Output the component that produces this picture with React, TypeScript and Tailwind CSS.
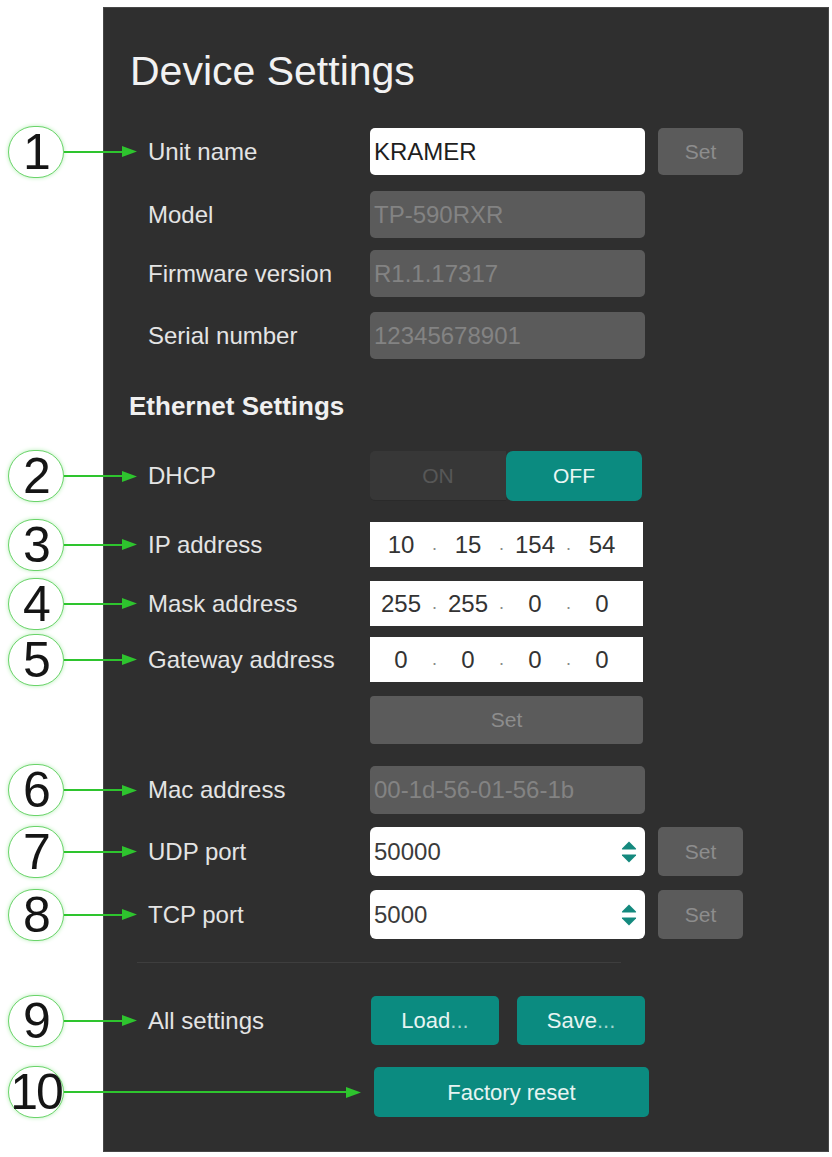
import React from "react";

const TEAL = "bg-[#0b8b80]";

function Callout({ n, long }: { n: number; long?: boolean }) {
  return (
    <div className="absolute left-[-103px] top-1/2 -translate-y-1/2 flex items-center pointer-events-none">
      <div className="ml-[7px] w-[56px] h-[52px] shrink-0 rounded-full border-[1.5px] border-[#6ad46a] bg-white shadow-[0_0_4px_#b9efb9] flex items-center justify-center text-[50px] leading-none text-[#151515] tracking-[-2px]">
        {n}
      </div>
      <div className={`${long ? "w-[282px]" : "w-[58px]"} h-[2px] bg-[#2ec42e]`} />
      <svg width="15" height="11" viewBox="0 0 15 11" className="shrink-0">
        <polygon points="0,0 15,5.5 0,11" fill="#2ec42e" />
      </svg>
    </div>
  );
}

function Label({ children }: { children: React.ReactNode }) {
  return <div className="w-[222px] shrink-0 text-[24px] text-[#e4e4e4]">{children}</div>;
}

function SetButton() {
  return (
    <button className="ml-[13px] w-[85px] h-full rounded-[5px] bg-[#5b5b5b] text-[21px] text-[#8d8d8d]">
      Set
    </button>
  );
}

function ReadOnly({ value }: { value: string }) {
  return (
    <div className="w-[275px] h-full rounded-[5px] bg-[#5b5b5b] pl-[4px] flex items-center text-[24px] text-[#838383]">
      {value}
    </div>
  );
}

function IpField({ parts }: { parts: string[] }) {
  return (
    <div className="w-[273px] h-full bg-white pl-[3px] flex items-center text-[24px] text-[#333]">
      {parts.map((p, i) => (
        <React.Fragment key={i}>
          {i > 0 && <span className="w-[11px] text-center text-[#8a8a8a] text-[18px]">.</span>}
          <span className="w-[56px] text-center">{p}</span>
        </React.Fragment>
      ))}
    </div>
  );
}

function Spinner() {
  return (
    <svg width="16" height="22" viewBox="0 0 16 22" className="shrink-0">
      <path d="M8 0.5 L15 7.5 Q15.5 8.5 14.5 8.5 L1.5 8.5 Q0.5 8.5 1 7.5 Z" fill="#14897e" />
      <path d="M8 21.5 L15 14.5 Q15.5 13.5 14.5 13.5 L1.5 13.5 Q0.5 13.5 1 14.5 Z" fill="#14897e" />
    </svg>
  );
}

function PortField({ value }: { value: string }) {
  return (
    <div className="w-[275px] h-full rounded-[6px] bg-white pl-[4px] pr-[8px] flex items-center justify-between text-[24px] text-[#3b3b3b]">
      <span>{value}</span>
      <Spinner />
    </div>
  );
}

export default function App() {
  return (
    <div className="w-[832px] min-h-[1157px] bg-white pt-[7px] pl-[103px] font-[family-name:'Liberation_Sans',Arial,sans-serif]">
      <div className="w-[726px] bg-[#2f2f2f] border border-[#474747] pb-[34px] flex flex-col">
        {/* Title */}
        <h1 className="mt-[40px] pl-[26px] text-[41px] leading-[47px] text-[#f2f2f2] font-normal">
          Device Settings
        </h1>

        <div className="relative mt-[33px] h-[47px] pl-[44px] flex items-center">
          <Callout n={1} />
          <Label>Unit name</Label>
          <div className="w-[275px] h-full rounded-[5px] bg-white pl-[4px] flex items-center text-[24px] text-[#1e1e1e]">
            KRAMER
          </div>
          <SetButton />
        </div>

        <div className="mt-[16px] h-[47px] pl-[44px] flex items-center">
          <Label>Model</Label>
          <ReadOnly value="TP-590RXR" />
        </div>

        <div className="mt-[12px] h-[47px] pl-[44px] flex items-center">
          <Label>Firmware version</Label>
          <ReadOnly value="R1.1.17317" />
        </div>

        <div className="mt-[15px] h-[47px] pl-[44px] flex items-center">
          <Label>Serial number</Label>
          <ReadOnly value="12345678901" />
        </div>

        <h2 className="mt-[32px] pl-[25px] text-[26px] leading-[30px] font-bold text-[#f0f0f0]">
          Ethernet Settings
        </h2>

        <div className="relative mt-[30px] h-[50px] pl-[44px] flex items-center">
          <Callout n={2} />
          <Label>DHCP</Label>
          <div className="w-[272px] h-full flex">
            <div className="flex-1 rounded-l-[5px] bg-[#373737] border-b border-[#2a2a2a] flex items-center justify-center text-[21px] text-[#575757]">
              ON
            </div>
            <div className={`flex-1 rounded-[7px] ${TEAL} flex items-center justify-center text-[21px] text-[#eaf6f4]`}>
              OFF
            </div>
          </div>
        </div>

        <div className="relative mt-[21px] h-[45px] pl-[44px] flex items-center">
          <Callout n={3} />
          <Label>IP address</Label>
          <IpField parts={["10", "15", "154", "54"]} />
        </div>

        <div className="relative mt-[14px] h-[45px] pl-[44px] flex items-center">
          <Callout n={4} />
          <Label>Mask address</Label>
          <IpField parts={["255", "255", "0", "0"]} />
        </div>

        <div className="relative mt-[11px] h-[45px] pl-[44px] flex items-center">
          <Callout n={5} />
          <Label>Gateway address</Label>
          <IpField parts={["0", "0", "0", "0"]} />
        </div>

        <div className="mt-[14px] h-[48px] pl-[266px] flex items-center">
          <button className="w-[273px] h-full rounded-[4px] bg-[#5b5b5b] text-[21px] text-[#8d8d8d]">Set</button>
        </div>

        <div className="relative mt-[22px] h-[48px] pl-[44px] flex items-center">
          <Callout n={6} />
          <Label>Mac address</Label>
          <ReadOnly value="00-1d-56-01-56-1b" />
        </div>

        <div className="relative mt-[13px] h-[49px] pl-[44px] flex items-center">
          <Callout n={7} />
          <Label>UDP port</Label>
          <PortField value="50000" />
          <SetButton />
        </div>

        <div className="relative mt-[14px] h-[49px] pl-[44px] flex items-center">
          <Callout n={8} />
          <Label>TCP port</Label>
          <PortField value="5000" />
          <SetButton />
        </div>

        <div className="mt-[23px] ml-[33px] w-[484px] h-px bg-[#3e3e3e]" />

        <div className="relative mt-[33px] h-[49px] pl-[44px] flex items-center">
          <Callout n={9} />
          <Label>All settings</Label>
          <button className={`ml-[1px] w-[128px] h-full rounded-[5px] ${TEAL} text-[22px] text-[#e6f4f2]`}>
            Load<span className="text-[#9fd3cd]">...</span>
          </button>
          <button className={`ml-[18px] w-[128px] h-full rounded-[5px] ${TEAL} text-[22px] text-[#e6f4f2]`}>
            Save<span className="text-[#9fd3cd]">...</span>
          </button>
        </div>

        <div className="relative mt-[22px] h-[50px] pl-[270px] flex items-center">
          <Callout n={10} long />
          <button className={`w-[275px] h-full rounded-[5px] ${TEAL} text-[22px] text-[#e6f4f2]`}>
            Factory reset
          </button>
        </div>
      </div>
    </div>
  );
}
